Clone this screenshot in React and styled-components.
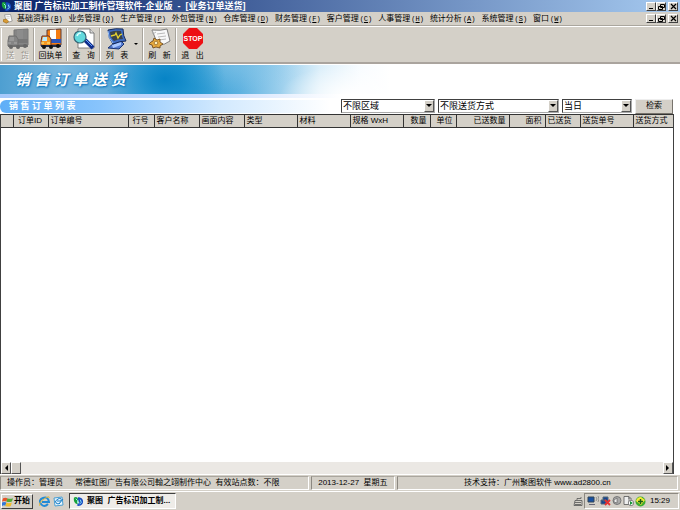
import React, { useState } from 'react';
import styled, { createGlobalStyle } from 'styled-components';

const GlobalStyle = createGlobalStyle`
    * {
        box-sizing: border-box;
    }
    body {
        margin: 0;
        background: #d4d0c8;
        color: #000;
        font-family: "Liberation Sans", "Noto Sans CJK SC", sans-serif;
        font-size: 8px;
        line-height: 12px;
        overflow: hidden;
    }
    button, select {
        font-family: inherit;
        font-size: inherit;
        line-height: inherit;
        color: inherit;
        padding: 0;
        margin: 0;
        border-radius: 0;
    }
`

const Window = styled.div`
    display: flex;
    flex-direction: column;
    height: 100vh;
`

const TitleBar = styled.header`
    display: flex;
    align-items: center;
    flex: none;
    height: 12px;
    padding: 0 2px 0 1px;
    gap: 2px;
    background: linear-gradient(90deg, #0a246a, #a6caf0);
    color: #fff;
    h1 {
        flex: 1;
        margin: 0;
        font-size: 9px;
        font-weight: bold;
        white-space: pre;
    }
`

const WindowButtons = styled.div`
    display: flex;
    margin-left: auto;
    button:last-child {
        margin-left: 2px;
    }
`

const CaptionButton = styled.button`
    display: flex;
    align-items: center;
    justify-content: center;
    width: 10px;
    height: 9px;
    background: #d4d0c8;
    border: 1px solid;
    border-color: #fff #404040 #404040 #fff;
`

const MenuBar = styled.nav`
    display: flex;
    align-items: center;
    flex: none;
    height: 14px;
    padding: 0 2px 0 3px;
    border-bottom: 1px solid #aaa69e;
`

const MenuList = styled.div`
    display: flex;
    gap: 6px;
    margin-left: 4px;
`

const MenuItem = styled.button`
    display: flex;
    border: 0;
    background: none;
    white-space: nowrap;
    span {
        font-family: "Liberation Mono", monospace;
        font-size: 7px;
        margin-left: 1px;
    }
`

const ToolBar = styled.div`
    display: flex;
    flex: none;
    height: 38px;
    padding: 1px 1px;
    border-top: 1px solid #fff;
    border-bottom: 2px solid #aaa49e;
`

const ToolGroup = styled.div`
    display: flex;
    padding: 0 1px;
    border-left: 1px solid #fff;
    border-right: 1px solid #a8a49c;
    &:last-child {
        border-right: 0;
    }
`

const ToolButton = styled.button`
    display: flex;
    flex-direction: column;
    align-items: center;
    width: ${props => props.$wide ? '39px' : '29px'};
    padding-right: ${props => props.$wide ? '9px' : '0'};
    border: 0;
    background: none;
    color: ${props => props.disabled ? '#9a968f' : '#000'};
    text-shadow: ${props => props.disabled ? '1px 1px #fff' : 'none'};
    position: relative;
    white-space: pre;
    svg {
        flex: none;
    }
`

const DropArrow = styled.i`
    position: absolute;
    right: 3px;
    top: 15px;
    border: 2px solid transparent;
    border-top-color: #000;
    border-bottom: 0;
`

const Banner = styled.div`
    display: flex;
    align-items: center;
    flex: none;
    height: 30px;
    padding-left: 15px;
    border-top: 1px solid #fff;
    background:
        radial-gradient(ellipse 60px 44px at 165px 14px, #0784c6 0%, #168fcdaa 45%, transparent 100%),
        radial-gradient(ellipse 70px 24px at 235px 2px, #8ec9ea77, transparent),
        radial-gradient(ellipse 70px 30px at 350px 30px, #fff, transparent),
        linear-gradient(90deg, #4e9fd1 0, #76b6df 60px, #5aa9d9 125px, #2296d0 180px, #5fb2e0 240px, #9bcfed 280px, #dceffa 320px, #f8fcff 360px, #fff 390px);
    h2 {
        margin: 0;
        color: #fff;
        font-size: 15px;
        line-height: 24px;
        font-style: italic;
        font-weight: bold;
        text-shadow: 0 0 2px #0873bd, 1px 1px 2px #0873bd;
    }
`

const Band = styled.div`
    flex: none;
    height: 4px;
    background: linear-gradient(90deg, #a5c8fb, #c5dafd 200px, #fff 340px);
`

const ListBar = styled.div`
    display: flex;
    align-items: center;
    flex: none;
    height: 16px;
    padding-right: 7px;
    background: #fff;
    h3 {
        flex: 1;
        margin: 0;
        height: 13px;
        padding-left: 9px;
        border-radius: 6px 0 0 6px;
        background: linear-gradient(90deg, #5faef7, #88c4fc 100px, #d2e9fe 220px, #fff 330px);
        color: #fff;
        font-size: 9px;
        line-height: 13px;
        font-weight: bold;
    }
`

const Filters = styled.form`
    display: flex;
    gap: 3px;
`

const SelectBox = styled.div`
    position: relative;
    flex: none;
    width: ${props => props.$width}px;
    select {
        appearance: none;
        width: 100%;
        height: 14px;
        padding: 0 14px 0 1px;
        border: 1px solid;
        border-color: #404040 #aaa #aaa #404040;
        background: #fff;
        font-size: 9px;
        line-height: 12px;
        display: block;
    }
    i {
        position: absolute;
        right: 1px;
        top: 1px;
        width: 10px;
        height: 12px;
        display: flex;
        align-items: center;
        justify-content: center;
        background: #d4d0c8;
        border: 1px solid;
        border-color: #fff #555 #555 #fff;
        pointer-events: none;
    }
    i::before {
        content: '';
        border: 3px solid transparent;
        border-top-color: #000;
        border-bottom: 0;
    }
`

const SearchButton = styled.button`
    width: 38px;
    height: 15px;
    background: #d4d0c8;
    border: 1px solid;
    border-color: #eee #77736c #77736c #eee;
`

const Grid = styled.main`
    display: flex;
    flex-direction: column;
    flex: 1;
    min-height: 0;
    margin-right: 6px;
    background: #fff;
    border-left: 1px solid #404040;
    border-right: 1px solid #404040;
    box-shadow: 6px 0 #fff;
    overflow: hidden;
`

const OrderTable = styled.table`
    width: 100%;
    table-layout: fixed;
    border-collapse: collapse;
    th {
        height: 13px;
        padding: 0 3px 0 2px;
        border: 1px solid #333;
        background: #d4d0c8;
        font-weight: normal;
        line-height: 10px;
        white-space: nowrap;
        overflow: hidden;
    }
    th:first-child {
        border-left: 0;
    }
    th:last-child {
        border-right: 0;
    }
`

const HeadCell = styled.th`
    text-align: ${props => props.$align || 'left'};
`

const ScrollBar = styled.div`
    display: flex;
    align-items: stretch;
    height: 12px;
    margin-top: auto;
    background: #ebe8e4;
`

const ScrollButton = styled.button`
    display: flex;
    align-items: center;
    justify-content: center;
    width: 10px;
    background: #d4d0c8;
    border: 1px solid;
    border-color: #fff #555 #555 #fff;
    &:last-child {
        margin-left: auto;
    }
`

const StatusBar = styled.footer`
    display: flex;
    flex: none;
    gap: 2px;
    height: 17px;
    padding: 1px 2px 1px 0;
    border-top: 1px solid #fff;
`

const StatusPane = styled.div`
    display: flex;
    align-items: center;
    flex: ${props => props.$flex};
    gap: 12px;
    padding-left: ${props => props.$center ? '0' : '6px'};
    justify-content: ${props => props.$center ? 'center' : 'flex-start'};
    border: 1px solid;
    border-color: #aaa69e #fff #fff #8c8881;
    white-space: pre;
`

const TaskBar = styled.div`
    display: flex;
    align-items: center;
    flex: none;
    height: 19px;
    padding: 0 1px;
    border-top: 1px solid #fff;
`

const StartButton = styled.button`
    display: flex;
    align-items: center;
    gap: 1px;
    width: 32px;
    height: 15px;
    background: #d4d0c8;
    border: 1px solid;
    border-color: #fff #404040 #404040 #fff;
    font-weight: bold;
    white-space: nowrap;
`

const QuickLaunch = styled.div`
    display: flex;
    gap: 3px;
    padding: 0 5px 0 6px;
`

const TaskButton = styled.button`
    display: flex;
    align-items: center;
    gap: 3px;
    width: 107px;
    height: 16px;
    padding-left: 3px;
    background: #eeece8;
    border: 1px solid;
    border-color: #404040 #fff #fff #404040;
    font-weight: bold;
    white-space: pre;
`

const Tray = styled.div`
    display: flex;
    align-items: center;
    gap: 1px;
    height: 16px;
    padding: 0 8px 0 2px;
    border: 1px solid;
    border-color: #8c8881 #fff #fff #8c8881;
    time {
        margin-left: 3px;
    }
`

const TrayArea = styled.div`
    display: flex;
    align-items: center;
    gap: 1px;
    margin-left: auto;
`

const menus = [
    ['基础资料', 'B'], ['业务管理', 'Q'], ['生产管理', 'P'], ['外包管理', 'N'],
    ['仓库管理', 'D'], ['财务管理', 'F'], ['客户管理', 'C'], ['人事管理', 'H'],
    ['统计分析', 'A'], ['系统管理', 'S'], ['窗口', 'W'],
];

const columns = [
    ['', 12], ['订单ID', 35, 'center'], ['订单编号', 80], ['行号', 26, 'center'],
    ['客户名称', 45], ['画面内容', 45], ['类型', 53], ['材料', 53],
    ['规格 WxH', 53], ['数量', 27, 'right'], ['单位', 26, 'right'], ['已送数量', 53, 'right'],
    ['面积', 36, 'right'], ['已送货', 35], ['送货单号', 53], ['送货方式', 40],
];

function Logo(){
    return(
        <svg width="11" height="11" viewBox="0 0 12 12">
            <path d="M1 2q2-2 4 0l1 4-1 3q-5-1-4-7z" fill="#19a23c"/>
            <path d="M6 1q5 1 5 5T6 11l-2-1 3-3-2-4z" fill="#174bc1"/>
            <path d="M3 3l2 2v3M8 4l1 3-2 2" stroke="#9cf6ff" fill="none"/>
        </svg>
    );
}

function DocIcon(){
    return(
        <svg width="10" height="10" viewBox="0 0 12 12">
            <path d="M2 1l7-.5 2 8-7 2z" fill="#fff" stroke="#777" strokeWidth=".7"/>
            <path d="M4 3h4M4 5h4" stroke="#aaa" strokeWidth=".6"/>
            <path d="M0 7l4-1 3 3-3 2-4-2z" fill="#d89c35" stroke="#8a5a10" strokeWidth=".6"/>
        </svg>
    );
}

function Truck({ grey }){
    const c = (color, g) => grey ? g : color;
    return(
        <svg width="24" height="22" viewBox="0 0 24 22">
            <path d="M8 2l14-1v16H8z" fill={c('#f47c12', '#858585')} stroke={c('#5c3c38', '#777')}/>
            <path d="M11 2l6-.5V11h-6z" fill={c('#fff', '#8c8c8c')}/>
            <path d="M9 11h13v4H9z" fill={c('#2a55bb', '#777')}/>
            <path d="M3 8h7l2 3v7H2v-5z" fill={c('#f59622', '#858585')} stroke={c('#633', '#707070')}/>
            <path d="M4 9h4v4H3z" fill={c('#b9eaff', '#999')}/>
            <path d="M2 17h20v2H2z" fill={c('#222b48', '#707070')}/>
            <circle cx="5" cy="19" r="2" fill={c('#111', '#666')}/>
            <circle cx="12" cy="19" r="2" fill={c('#111', '#666')}/>
            <circle cx="19" cy="18" r="2" fill={c('#111', '#666')}/>
            <path d="M2 15h3M8 15h3" stroke={c('#fff38a', '#aaa')}/>
        </svg>
    );
}

function SearchIcon(){
    return(
        <svg width="24" height="22" viewBox="0 0 24 22">
            <path d="M6 1h12l4 4v15H6z" fill="#fff" stroke="#666" strokeWidth=".8"/>
            <path d="M18 1v4h4" fill="#ddd" stroke="#666" strokeWidth=".8"/>
            <path d="M13 12l8 8" stroke="#102d8c" strokeWidth="4"/>
            <path d="M14 12l6 6" stroke="#65a4ff"/>
            <circle cx="8" cy="9" r="6" fill="#61d9dd" stroke="#367" strokeWidth="1.2"/>
            <path d="M5 8q1-3 4-3" stroke="#dff" strokeWidth="1.5" fill="none"/>
        </svg>
    );
}

function MonitorIcon(){
    return(
        <svg width="24" height="22" viewBox="0 0 24 22">
            <path d="M15 12l4 4-5 5-11-1 6-5z" fill="#567bd0" stroke="#173374"/>
            <path d="M7 17l9-3v3l-8 3z" fill="#a9c7ff"/>
            <path d="M3 2q8-2 15-1 0 7 3 12-6 0-13 3Q3 10 3 2z" fill="#3f6cc4" stroke="#142958"/>
            <path d="M5 4q6-2 11-1 0 4 2 8-5 0-9 2-4-4-4-9z" fill="#39434b"/>
            <path d="M6 8l4-1 1-2 2 5 2-3 2-1" stroke="#e9d530" strokeWidth="1.3" fill="none"/>
            <path d="M3 3q0 7 5 12" stroke="#9bc5ff" fill="none"/>
        </svg>
    );
}

function RefreshIcon(){
    return(
        <svg width="24" height="22" viewBox="0 0 24 22">
            <path d="M4 2q9 1 15-1l3 12q-5 4-12 4z" fill="#f8f8f8" stroke="#666" strokeWidth=".8"/>
            <path d="M4 2l1 4 3-2M9 6l8-1M10 9l8-1M11 12l7-1" stroke="#aaa" strokeWidth=".8" fill="none"/>
            <path d="M3 14l2-1 1-3 3 2 3-1v3l3 2-3 2v2l-4-1-3 1-1-3-3-1z" fill="#e5a83c" stroke="#654015" strokeWidth=".8"/>
            <circle cx="8" cy="15" r="1.8" fill="#fff0bd" stroke="#8d6020" strokeWidth=".7"/>
        </svg>
    );
}

function StopIcon(){
    return(
        <svg width="24" height="22" viewBox="0 0 24 22">
            <path d="M8 0h8l6 6v9l-6 6H8l-6-6V6z" fill="#ed1014"/>
            <text x="12" y="13" textAnchor="middle" fill="#fff" fontFamily="Liberation Sans, sans-serif" fontSize="7" fontWeight="bold">STOP</text>
        </svg>
    );
}

function Captions(){
    return(
        <WindowButtons>
            <CaptionButton aria-label="最小化"><svg width="7" height="7"><path d="M1 5h4v1H1z"/></svg></CaptionButton>
            <CaptionButton aria-label="还原"><svg width="7" height="7"><path d="M2.5 1.5h4v3h-4zM.5 3.5h4v3h-4z" fill="#d4d0c8" stroke="#000"/></svg></CaptionButton>
            <CaptionButton aria-label="关闭"><svg width="7" height="7"><path d="M1 1l5 5M6 1L1 6" stroke="#000" strokeWidth="1.2"/></svg></CaptionButton>
        </WindowButtons>
    );
}

function Picker({ label, width, options }){
    let [value, setValue] = useState(options[0]);
    return(
        <SelectBox $width={width}>
            <select aria-label={label} value={value} onChange={e => setValue(e.target.value)}>
                {options.map(o => <option key={o}>{o}</option>)}
            </select>
            <i/>
        </SelectBox>
    );
}

function App(){
    return(
        <>
        <GlobalStyle/>
        <Window>
            <TitleBar>
                <Logo/>
                <h1>聚图 广告标识加工制作管理软件-企业版  -  [业务订单送货]</h1>
                <Captions/>
            </TitleBar>
            <MenuBar>
                <DocIcon/>
                <MenuList>
                    {menus.map(([name, key]) => (
                        <MenuItem key={name}>{name}<span>(<u>{key}</u>)</span></MenuItem>
                    ))}
                </MenuList>
                <Captions/>
            </MenuBar>
            <ToolBar>
                <ToolGroup><ToolButton disabled><Truck grey/>送   货</ToolButton></ToolGroup>
                <ToolGroup><ToolButton><Truck/>回执单</ToolButton></ToolGroup>
                <ToolGroup><ToolButton><SearchIcon/>查   询</ToolButton></ToolGroup>
                <ToolGroup><ToolButton $wide><MonitorIcon/>列   表<DropArrow/></ToolButton></ToolGroup>
                <ToolGroup><ToolButton><RefreshIcon/>刷   新</ToolButton></ToolGroup>
                <ToolGroup><ToolButton><StopIcon/>退   出</ToolButton></ToolGroup>
            </ToolBar>
            <Banner><h2>销 售 订 单 送 货</h2></Banner>
            <Band/>
            <ListBar>
                <h3>销 售 订 单 列 表</h3>
                <Filters onSubmit={e => e.preventDefault()}>
                    <Picker label="区域" width={94} options={['不限区域']}/>
                    <Picker label="送货方式" width={121} options={['不限送货方式']}/>
                    <Picker label="日期" width={70} options={['当日']}/>
                    <SearchButton>检索</SearchButton>
                </Filters>
            </ListBar>
            <Grid>
                <OrderTable>
                    <colgroup>
                        {columns.map(([name, width]) => <col key={name} style={{ width }}/>)}
                    </colgroup>
                    <thead>
                        <tr>
                            {columns.map(([name, , align]) => <HeadCell key={name} $align={align}>{name}</HeadCell>)}
                        </tr>
                    </thead>
                </OrderTable>
                <ScrollBar>
                    <ScrollButton aria-label="向左"><svg width="4" height="6"><path d="M4 0v6L1 3z"/></svg></ScrollButton>
                    <ScrollButton aria-label="滑块"/>
                    <ScrollButton aria-label="向右"><svg width="4" height="6"><path d="M0 0v6l3-3z"/></svg></ScrollButton>
                </ScrollBar>
            </Grid>
            <StatusBar>
                <StatusPane $flex="304"><span>操作员：管理员</span><span>常德虹图广告有限公司翰之翊制作中心  有效站点数：不限</span></StatusPane>
                <StatusPane $flex="82" $center>2013-12-27  星期五</StatusPane>
                <StatusPane $flex="282" $center>技术支持：广州聚图软件 www.ad2800.cn</StatusPane>
            </StatusBar>
            <TaskBar>
                <StartButton>
                    <svg width="11" height="11" viewBox="0 0 10 10">
                        <path d="M1 2q2-1 4 0L4 5Q2 4 0 5z" fill="#e8542a"/>
                        <path d="M5 2q2 1 5 0L9 5Q6 6 4 5z" fill="#55aa35"/>
                        <path d="M0 6q2-1 4 0L3 9Q2 8 0 9z" fill="#3477d6"/>
                        <path d="M4 6q2 1 5 0L8 9Q6 10 3 9z" fill="#f1bd2d"/>
                    </svg>
                    开始
                </StartButton>
                <QuickLaunch>
                    <svg width="11" height="11" viewBox="0 0 11 11">
                        <path d="M9 8Q5 12 2 8T4 2t6 4H3" stroke="#218bd7" strokeWidth="2" fill="none"/>
                        <path d="M1 10Q-1 7 5 3t5-1" stroke="#e4b734" fill="none"/>
                    </svg>
                    <svg width="11" height="11" viewBox="0 0 11 11">
                        <path d="M1 2l8-1 1 8-8 1z" fill="#e8f6ff" stroke="#4b9fd2"/>
                        <path d="M7 7Q5 9 3 7t2-4 3 2H4M6 8l4-5" stroke="#187fc7" fill="none"/>
                    </svg>
                </QuickLaunch>
                <TaskButton><Logo/>聚图  广告标识加工制...</TaskButton>
                <TrayArea>
                    <svg width="10" height="10" viewBox="0 0 10 10">
                        <path d="M2 4.500h7v5H1zM4 4V2.500h4V1M2 6.500h6M2 8.500h6" fill="none" stroke="#555" strokeWidth=".8"/>
                    </svg>
                    <Tray>
                        <svg width="12" height="10" viewBox="0 0 12 10">
                            <path d="M1 1h6v5H1z" fill="#1951a3" stroke="#345"/>
                            <path d="M2 8.500h6" stroke="#667"/>
                            <path d="M9 1q2 2 0 4M11 0q2 3 0 6" stroke="#777" fill="none" strokeWidth=".7"/>
                        </svg>
                        <svg width="11" height="10" viewBox="0 0 11 10">
                            <path d="M3 1h5v4H3zM1 4h5v4H1z" fill="#174591" stroke="#567"/>
                            <path d="M5 4l5 5M10 4L5 9" stroke="#e43131" strokeWidth="1.8"/>
                        </svg>
                        <svg width="10" height="10" viewBox="0 0 10 10">
                            <circle cx="5" cy="4.5" r="4" fill="#aaa" stroke="#777"/>
                            <path d="M2 4l3-2v5L2 6z" fill="#eee" stroke="#555" strokeWidth=".6"/>
                        </svg>
                        <svg width="11" height="10" viewBox="0 0 11 10">
                            <path d="M1 .5h5v8H1zM5 2h3v7" fill="#eee" stroke="#555" strokeWidth=".8"/>
                            <circle cx="8" cy="7" r="2.7" fill="#fff" stroke="#444" strokeWidth=".6"/>
                            <path d="M7 5v4l3-2z" fill="#149136"/>
                        </svg>
                        <svg width="11" height="11" viewBox="0 0 11 11">
                            <circle cx="5.5" cy="5.5" r="5" fill="#3eac31"/>
                            <path d="M1 5Q2 1 6 1l4 3-4 5z" fill="#f3e937"/>
                            <path d="M5.5 3v5M3 5.5h5" stroke="#165e1a" strokeWidth="1.5"/>
                        </svg>
                        <time>15:29</time>
                    </Tray>
                </TrayArea>
            </TaskBar>
        </Window>
        </>
    );
}

export default App;
